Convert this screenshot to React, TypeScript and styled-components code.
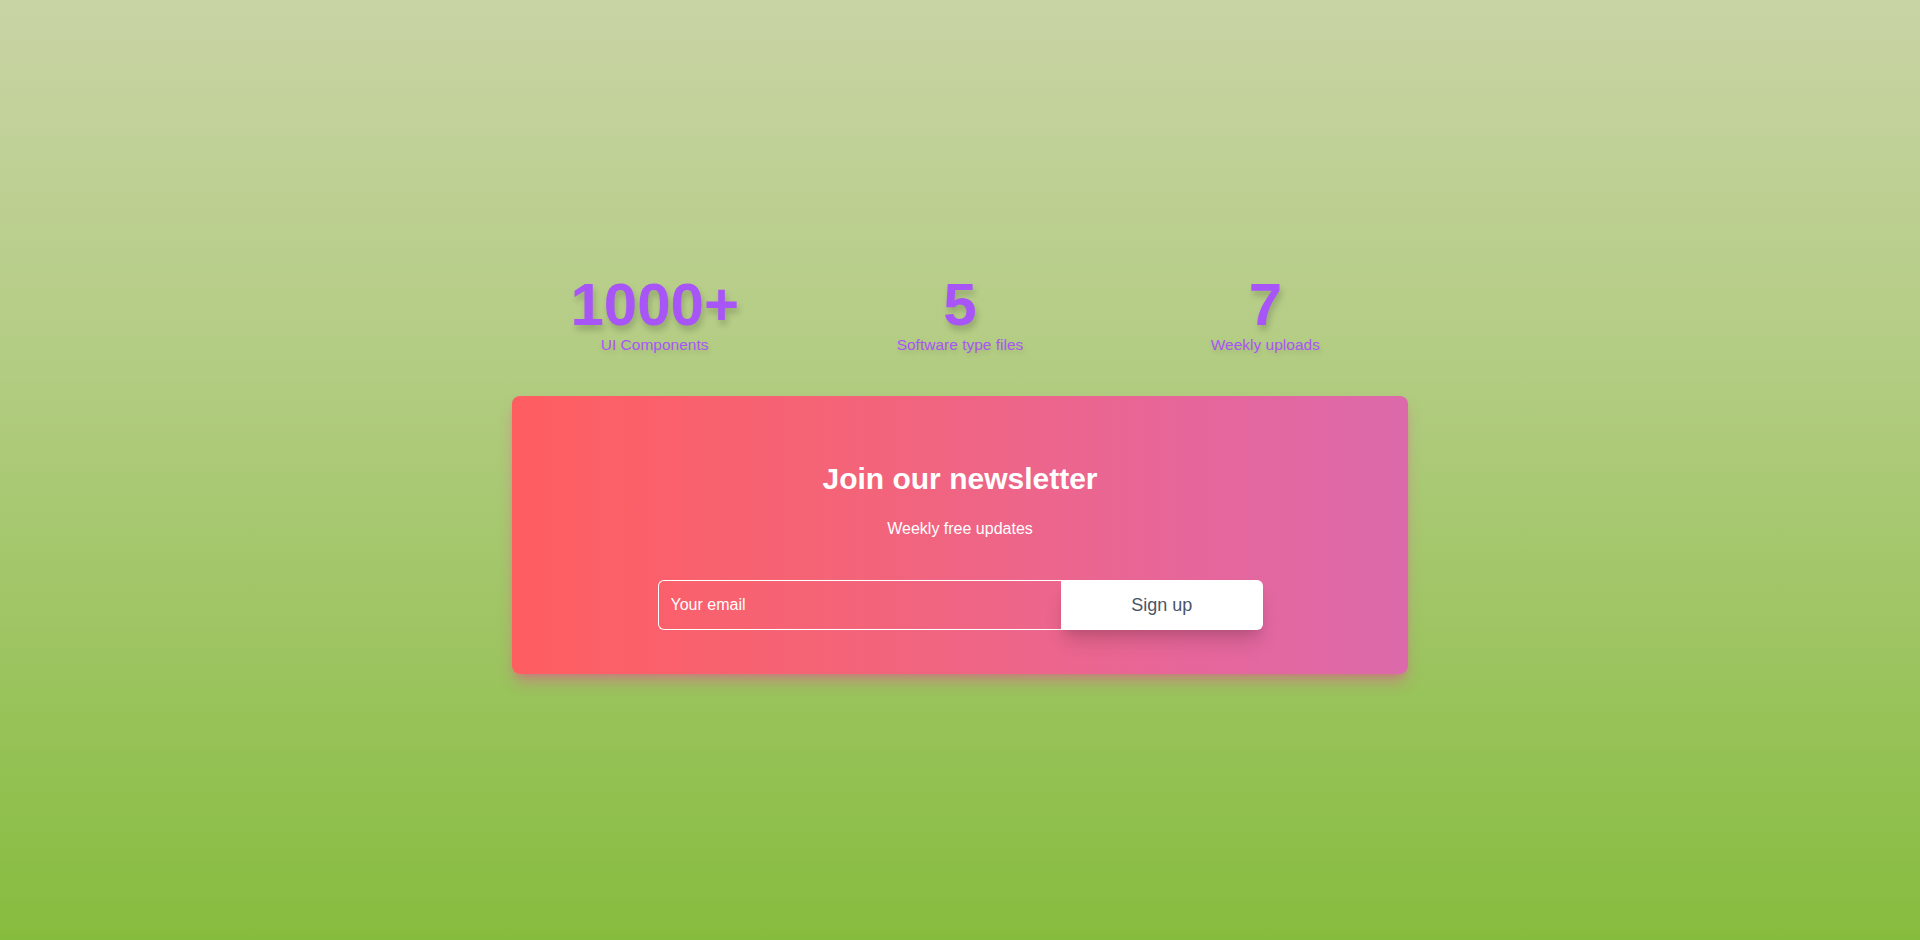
import React from "react";
import styled, { createGlobalStyle } from "styled-components";

const Global = createGlobalStyle`
  html, body { margin: 0; padding: 0; }
  body {
    font-family: "Liberation Sans", Arial, sans-serif;
    background: linear-gradient(to bottom, #c9d4a5 0%, #b2cc81 40%, #86bc3e 100%);
    min-height: 100vh;
  }
  * { box-sizing: border-box; }
`;

const Page = styled.main`
  min-height: 940px;
  display: flex;
  flex-direction: column;
  align-items: center;
  padding-top: 275px;
`;

const Container = styled.div`
  width: 896px;
  display: flex;
  flex-direction: column;
  gap: 41px;
`;

const Stats = styled.div`
  display: grid;
  grid-template-columns: repeat(3, 1fr);
  gap: 20px;
`;

const Stat = styled.div`
  display: flex;
  flex-direction: column;
  align-items: center;
  color: #a855f7;
`;

const Number = styled.div`
  font-size: 60px;
  font-weight: 700;
  line-height: 60px;
  text-shadow: 2px 5px 6px rgba(0, 0, 0, 0.18);
`;

const Label = styled.div`
  font-size: 15.5px;
  line-height: 20px;
  text-shadow: 1px 3px 5px rgba(0, 0, 0, 0.12);
`;

const Card = styled.section`
  border-radius: 8px;
  background: linear-gradient(to right, #ff5e61 0%, #f3647a 40%, #e7669a 75%, #dc6aab 100%);
  box-shadow: 0 10px 15px -3px rgba(236, 72, 153, 0.45), 0 4px 6px -4px rgba(236, 72, 153, 0.4);
  padding: 65px 0 44px;
  display: flex;
  flex-direction: column;
  align-items: center;
  color: #ffffff;
`;

const Title = styled.h2`
  margin: 0;
  font-size: 30px;
  line-height: 36px;
  font-weight: 700;
`;

const Subtitle = styled.p`
  margin: 20px 0 0;
  font-size: 16px;
  line-height: 24px;
`;

const Form = styled.form`
  margin-top: 39px;
  display: flex;
  width: 605px;
  height: 50px;
`;

const EmailInput = styled.input`
  flex: 2;
  min-width: 0;
  height: 100%;
  background: transparent;
  border: 1px solid #ffffff;
  border-right: none;
  border-radius: 6px 0 0 6px;
  padding: 0 12px;
  font-family: "Liberation Sans", Arial, sans-serif;
  font-size: 16px;
  color: #ffffff;
  outline: none;
  &::placeholder { color: #ffffff; opacity: 1; }
`;

const Button = styled.button`
  flex: 1;
  height: 100%;
  border: none;
  background: #ffffff;
  border-radius: 0 6px 6px 0;
  font-family: "Liberation Sans", Arial, sans-serif;
  font-size: 18px;
  color: #4a5568;
  cursor: pointer;
  box-shadow: 0 14px 20px -4px rgba(0, 0, 0, 0.16), 0 6px 8px -3px rgba(0, 0, 0, 0.08);
`;

const stats = [
  { value: "1000+", label: "UI Components" },
  { value: "5", label: "Software type files" },
  { value: "7", label: "Weekly uploads" },
];

export default function App() {
  return (
    <>
      <Global />
      <Page>
        <Container>
          <Stats>
            {stats.map((s) => (
              <Stat key={s.label}>
                <Number>{s.value}</Number>
                <Label>{s.label}</Label>
              </Stat>
            ))}
          </Stats>
          <Card>
            <Title>Join our newsletter</Title>
            <Subtitle>Weekly free updates</Subtitle>
            <Form onSubmit={(e) => e.preventDefault()}>
              <EmailInput type="email" placeholder="Your email" />
              <Button type="submit">Sign up</Button>
            </Form>
          </Card>
        </Container>
      </Page>
    </>
  );
}
